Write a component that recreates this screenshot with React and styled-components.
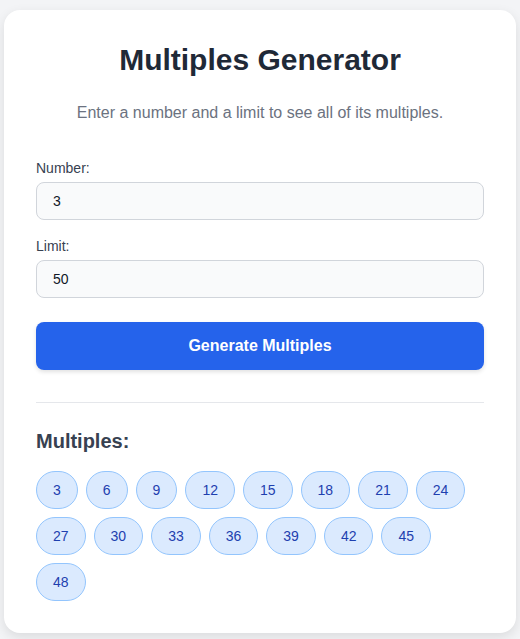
import React, { useState } from "react";
import styled, { createGlobalStyle } from "styled-components";

const Global = createGlobalStyle`
  html, body { margin: 0; padding: 0; background: #f3f4f6; }
  body { font-family: "Liberation Sans", Arial, sans-serif; }
  * { box-sizing: border-box; }
`;

const Page = styled.div`
  padding: 10px 4px 7px;
`;

const Card = styled.div`
  background: #ffffff;
  border-radius: 16px;
  box-shadow: 0 4px 12px rgba(0, 0, 0, 0.1);
  padding: 32px;
`;

const Title = styled.h1`
  margin: 0 0 23px;
  font-size: 30px;
  line-height: 36px;
  font-weight: 700;
  color: #1f2937;
  text-align: center;
`;

const Subtitle = styled.p`
  margin: 0 0 33px;
  font-size: 16px;
  line-height: 24px;
  color: #6b7280;
  text-align: center;
`;

const Field = styled.div`
  display: flex;
  flex-direction: column;
  gap: 4px;
  margin-bottom: ${(p) => p.$mb}px;
`;

const Label = styled.label`
  font-size: 14px;
  line-height: 20px;
  color: #374151;
`;

const Input = styled.input`
  width: 100%;
  height: 38px;
  padding: 0 16px;
  font-family: inherit;
  font-size: 14px;
  color: #111827;
  background: #f9fafb;
  border: 1px solid #d1d5db;
  border-radius: 8px;
  outline: none;
`;

const Button = styled.button`
  width: 100%;
  height: 48px;
  border: none;
  border-radius: 8px;
  background: #2563eb;
  color: #ffffff;
  font-family: inherit;
  font-size: 16px;
  font-weight: 700;
  box-shadow: 0 2px 4px rgba(0, 0, 0, 0.12);
  cursor: pointer;
`;

const Divider = styled.hr`
  margin: 32px 0 0;
  border: none;
  border-top: 1px solid #e5e7eb;
`;

const Results = styled.section`
  padding-top: 24px;
`;

const ResultsTitle = styled.h2`
  margin: 0 0 16px;
  font-size: 20px;
  line-height: 28px;
  font-weight: 700;
  color: #374151;
`;

const ChipList = styled.div`
  display: flex;
  flex-wrap: wrap;
  gap: 8px;
`;

const Chip = styled.span`
  display: inline-flex;
  align-items: center;
  justify-content: center;
  height: 38px;
  padding: 0 16px;
  font-size: 14px;
  color: #1e40af;
  background: #dbeafe;
  border: 1px solid #93c5fd;
  border-radius: 9999px;
`;

export default function App() {
  const [num, setNum] = useState("3");
  const [limit, setLimit] = useState("50");
  const [multiples, setMultiples] = useState(() => {
    const r = [];
    for (let i = 3; i <= 50; i += 3) r.push(i);
    return r;
  });

  const generate = () => {
    const n = parseInt(num, 10);
    const l = parseInt(limit, 10);
    const r = [];
    if (n > 0 && l > 0) for (let i = n; i <= l; i += n) r.push(i);
    setMultiples(r);
  };

  return (
    <>
      <Global />
      <Page>
        <Card>
          <Title>Multiples Generator</Title>
          <Subtitle>Enter a number and a limit to see all of its multiples.</Subtitle>
          <Field $mb={16}>
            <Label htmlFor="num">Number:</Label>
            <Input id="num" value={num} onChange={(e) => setNum(e.target.value)} />
          </Field>
          <Field $mb={24}>
            <Label htmlFor="limit">Limit:</Label>
            <Input id="limit" value={limit} onChange={(e) => setLimit(e.target.value)} />
          </Field>
          <Button onClick={generate}>Generate Multiples</Button>
          <Divider />
          <Results>
            <ResultsTitle>Multiples:</ResultsTitle>
            <ChipList>
              {multiples.map((m) => (
                <Chip key={m}>{m}</Chip>
              ))}
            </ChipList>
          </Results>
        </Card>
      </Page>
    </>
  );
}
